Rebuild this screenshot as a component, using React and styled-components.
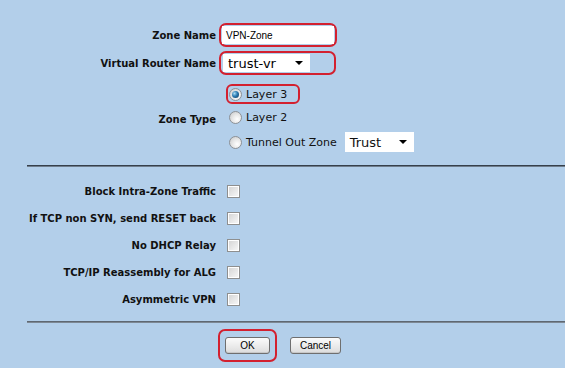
import React from "react";
import styled, { createGlobalStyle } from "styled-components";

const Global = createGlobalStyle`
  html, body { margin: 0; padding: 0; background: #b3cfea; }
  body { font-family: "DejaVu Sans", Verdana, sans-serif; color: #000; }
`;

const Page = styled.div`
  width: 565px;
  height: 368px;
  padding-top: 23px;
  box-sizing: border-box;
  overflow: hidden;
`;

const Row = styled.div`
  display: grid;
  grid-template-columns: 216px auto;
  column-gap: ${(p) => p.$gap ?? 3}px;
  align-items: center;
  justify-items: start;
  margin-top: ${(p) => p.$mt ?? 0}px;
`;

const Label = styled.div`
  justify-self: end;
  font-size: 10px;
  font-weight: bold;
  white-space: nowrap;
  color: #111;
`;

const Highlight = styled.div`
  display: flex;
  align-items: center;
  border: 2px solid ${(p) => (p.$on ? "#d3202f" : "transparent")};
  border-radius: 7px;
  padding: ${(p) => p.$pad || "1px"};
`;

const TextInput = styled.div`
  width: 112px;
  height: 18px;
  background: #fff;
  box-sizing: border-box;
  padding-left: 4px;
  display: flex;
  align-items: center;
  font-family: "Liberation Sans", Arial, sans-serif;
  font-size: 10px;
`;

const Select = styled.div`
  width: ${(p) => p.$w}px;
  height: ${(p) => p.$h || 18}px;
  background: #fff;
  box-sizing: border-box;
  padding: 0 7px 0 5px;
  display: flex;
  align-items: center;
  justify-content: space-between;
  font-size: 13px;
  white-space: nowrap;
`;

const Arrow = styled.span`
  width: 0;
  height: 0;
  border-left: 4px solid transparent;
  border-right: 4px solid transparent;
  border-top: 4px solid #000;
`;

const RadioGroup = styled.div`
  display: flex;
  flex-direction: column;
  align-items: flex-start;
  gap: 3px;
  margin-left: 7px;
`;

const Option = styled.div`
  display: flex;
  align-items: center;
  gap: 4px;
  border: 2px solid ${(p) => (p.$on ? "#d3202f" : "transparent")};
  border-radius: 6px;
  padding: 0 11px 0 1px;
  min-height: 16px;
  font-size: 11px;
  white-space: nowrap;
  color: #111;
`;

const Radio = styled.span`
  position: relative;
  width: 13px;
  height: 13px;
  box-sizing: border-box;
  border-radius: 50%;
  border: 1px solid #8d9196;
  background: radial-gradient(circle at 65% 65%, #ffffff 0%, #e8e8e8 45%, #c4c6c8 100%);
  flex: none;
  &::after {
    content: "";
    display: ${(p) => (p.$checked ? "block" : "none")};
    position: absolute;
    left: 2px;
    top: 2px;
    width: 7px;
    height: 7px;
    border-radius: 50%;
    background: radial-gradient(circle at 35% 35%, #a6dcf5 0%, #2a79b0 45%, #0d3455 100%);
  }
`;

const SmallSelectGap = styled.span`
  margin-left: 4px;
  display: flex;
`;

const Separator = styled.div`
  margin-top: ${(p) => p.$mt}px;
  margin-left: 27px;
  height: 0;
  border-top: 1px solid ${(p) => p.$c || "#36404b"};
  border-bottom: 1px solid ${(p) => p.$c2 || "#6f7d8c"};
`;

const Checks = styled.div`
  padding-top: 11px;
`;

const CheckRow = styled(Row)`
  height: 27px;
`;

const Checkbox = styled.span`
  width: 13px;
  height: 13px;
  box-sizing: border-box;
  border: 1px solid #8e8f8f;
  background: #fff;
  padding: 1px;
  display: block;
  &::before {
    content: "";
    display: block;
    width: 100%;
    height: 100%;
    background: linear-gradient(135deg, #d6d6d6, #f6f6f6);
  }
`;

const Buttons = styled.div`
  display: flex;
  align-items: center;
  gap: 13px;
  padding: 6px 0 0 218px;
`;

const Button = styled.div`
  width: ${(p) => p.$w}px;
  height: 17px;
  box-sizing: border-box;
  border: 1px solid #6f6f6f;
  border-radius: 3px;
  background: linear-gradient(#fbfbfb, #ececec 50%, #dcdcdc);
  box-shadow: inset 0 -1px 0 #c8c8c8;
  display: flex;
  align-items: center;
  justify-content: center;
  font-family: "Liberation Sans", Arial, sans-serif;
  font-size: 10px;
  color: #000;
`;

const checks = [
  "Block Intra-Zone Traffic",
  "If TCP non SYN, send RESET back",
  "No DHCP Relay",
  "TCP/IP Reassembly for ALG",
  "Asymmetric VPN",
];

export default function App() {
  return (
    <>
      <Global />
      <Page>
        <Row>
          <Label>Zone Name</Label>
          <Highlight $on $pad="1px">
            <TextInput>VPN-Zone</TextInput>
          </Highlight>
        </Row>
        <Row $mt={4}>
          <Label>Virtual Router Name</Label>
          <Highlight $on $pad="1px 24px 1px 2px">
            <Select $w={87}>
              trust-vr
              <Arrow />
            </Select>
          </Highlight>
        </Row>
        <Row $mt={9}>
          <Label>Zone Type</Label>
          <RadioGroup>
            <Option $on>
              <Radio $checked />
              Layer 3
            </Option>
            <Option>
              <Radio />
              Layer 2
            </Option>
            <Option>
              <Radio />
              Tunnel Out Zone
              <SmallSelectGap>
                <Select $w={69} $h={20}>
                  Trust
                  <Arrow />
                </Select>
              </SmallSelectGap>
            </Option>
          </RadioGroup>
        </Row>
        <Separator $mt={11} />
        <Checks>
          {checks.map((c) => (
            <CheckRow key={c} $gap={11}>
              <Label>{c}</Label>
              <Checkbox />
            </CheckRow>
          ))}
        </Checks>
        <Separator $mt={8} $c="#5f6872" $c2="#7d8894" />
        <Buttons>
          <Highlight $on $pad="6px 5px">
            <Button $w={45}>OK</Button>
          </Highlight>
          <Button $w={51}>Cancel</Button>
        </Buttons>
      </Page>
    </>
  );
}
